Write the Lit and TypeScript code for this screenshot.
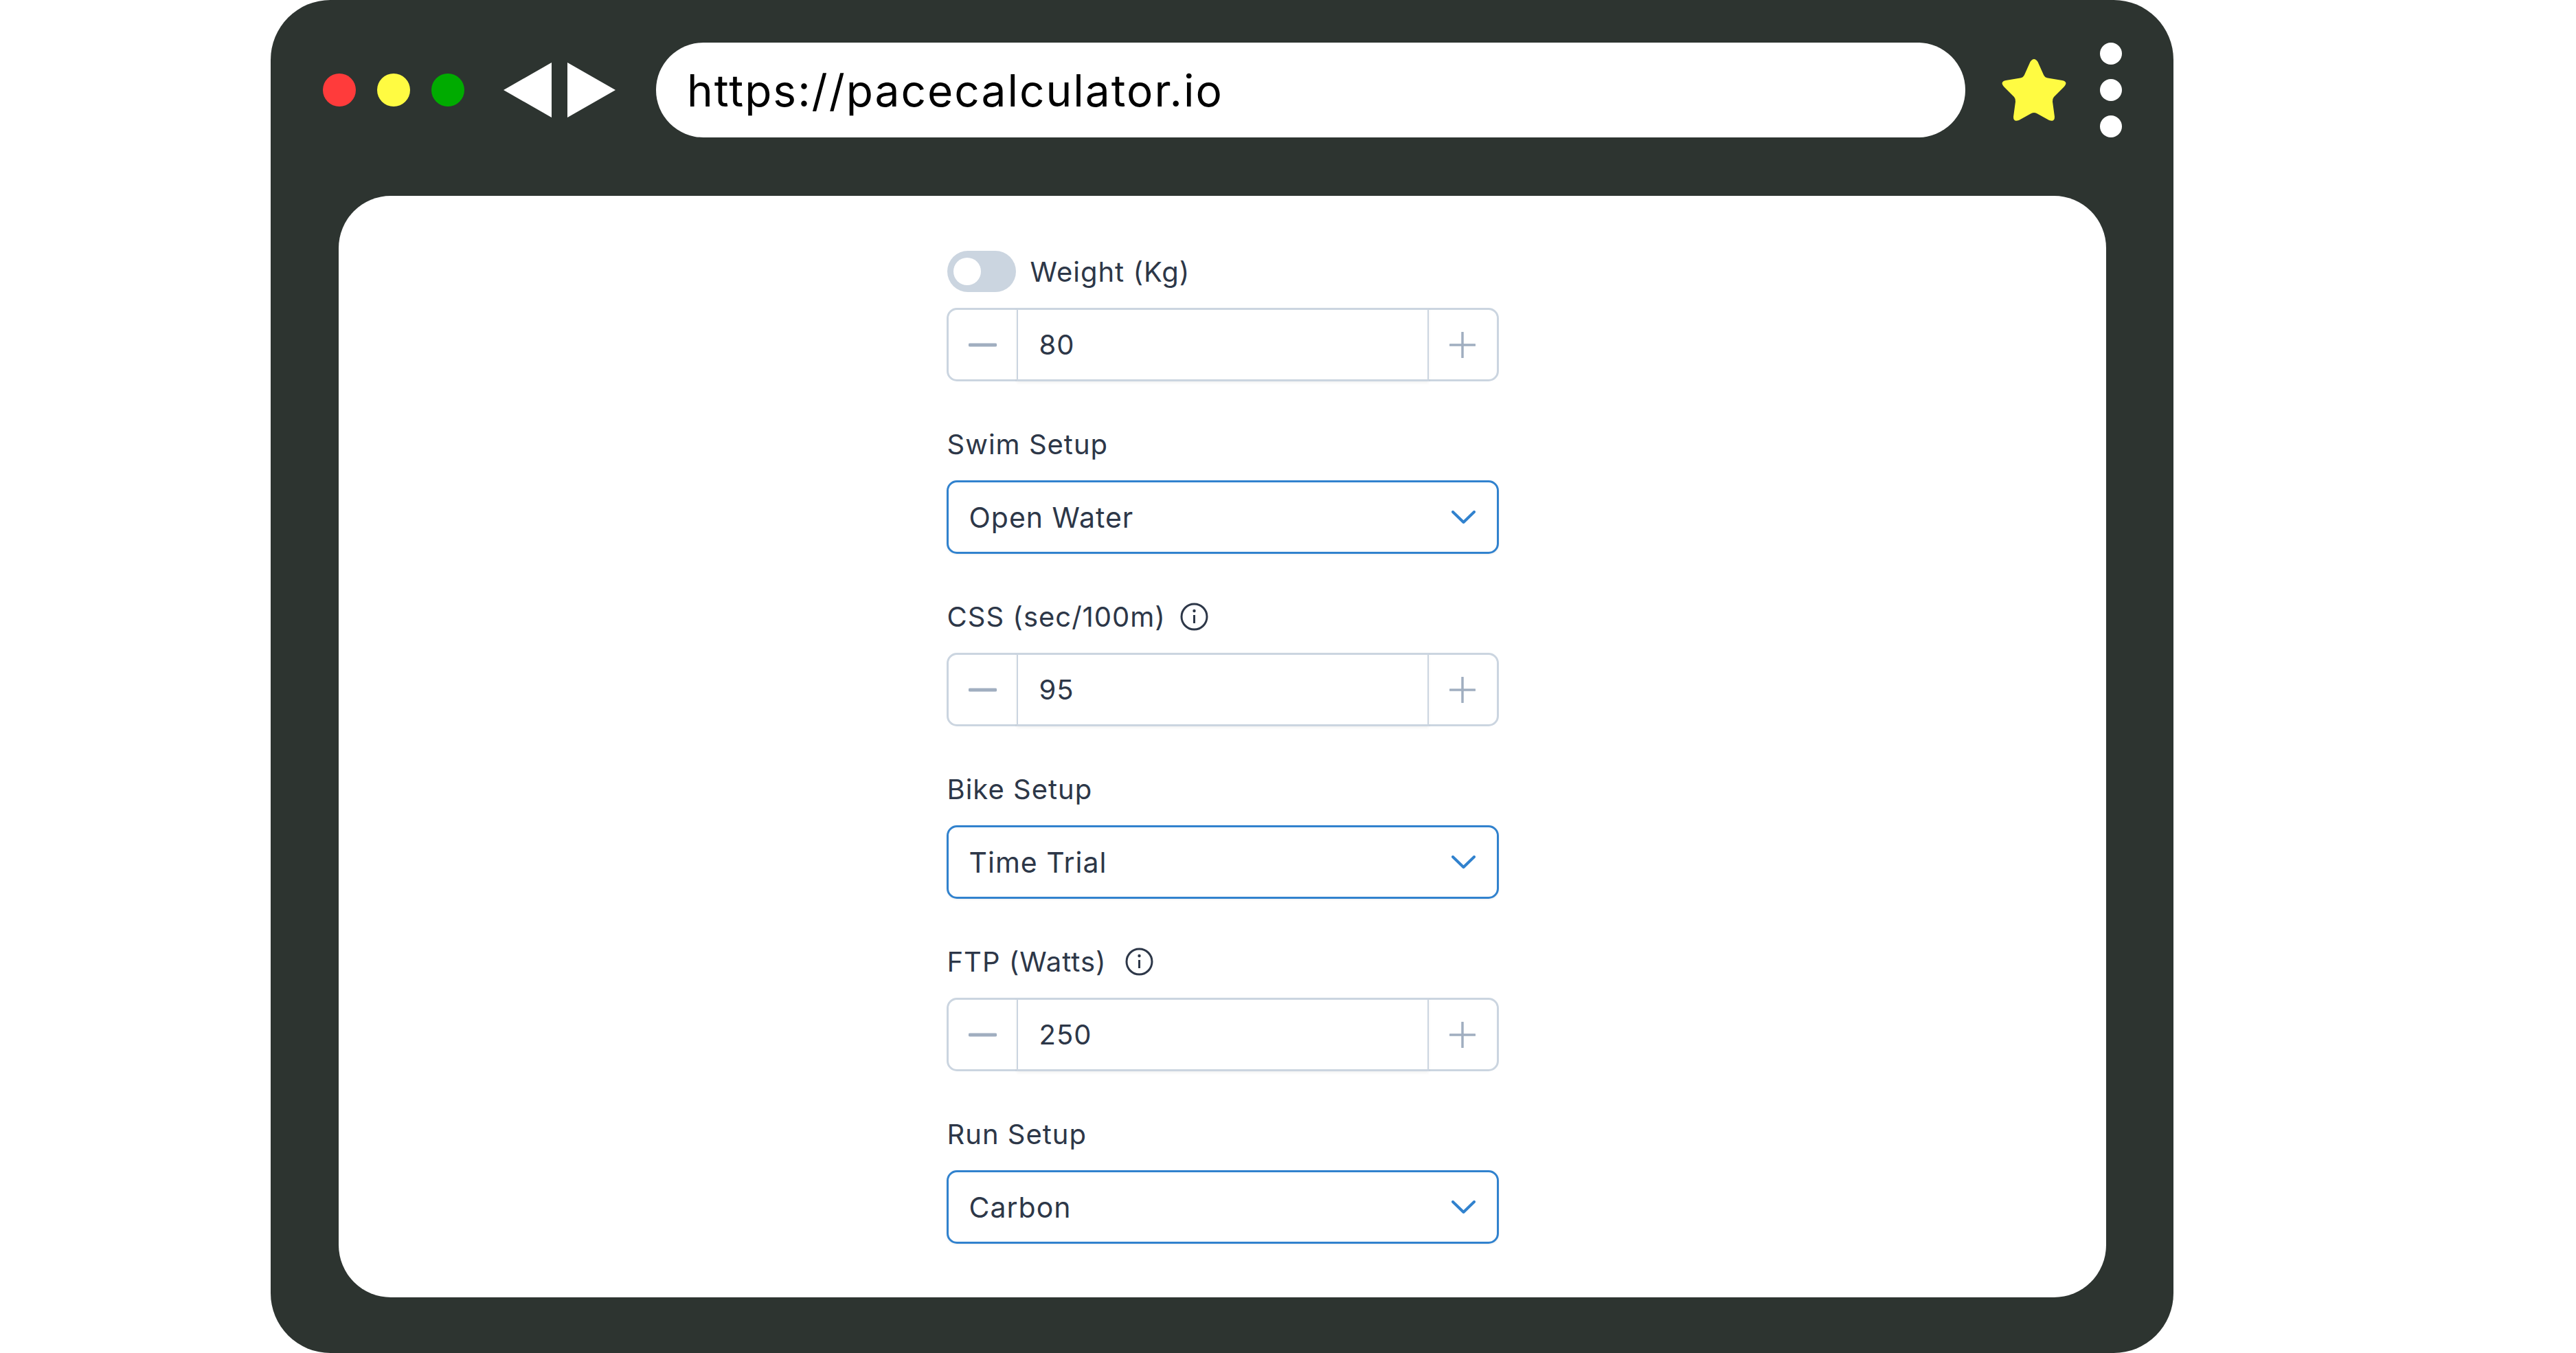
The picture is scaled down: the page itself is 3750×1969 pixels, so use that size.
import { LitElement, html, css, svg } from "lit";
import { customElement } from "lit/decorators.js";

const chevron = svg`<path d="M2 2l15.5 15L33 2" fill="none" stroke="#3182ce" stroke-width="4" stroke-linecap="round" stroke-linejoin="round"/>`;

type Field =
  | { kind: "stepper"; label: string; value: string; toggle?: boolean; info?: string }
  | { kind: "select"; label: string; value: string };

const fields: Field[] = [
  { kind: "stepper", label: "Weight (Kg)", value: "80", toggle: true },
  { kind: "select", label: "Swim Setup", value: "Open Water" },
  { kind: "stepper", label: "CSS (sec/100m)", value: "95", info: "near" },
  { kind: "select", label: "Bike Setup", value: "Time Trial" },
  { kind: "stepper", label: "FTP (Watts)", value: "250", info: "far" },
  { kind: "select", label: "Run Setup", value: "Carbon" },
];

@customElement("app-root")
export class AppRoot extends LitElement {
  static styles = css`
    :host {
      display: block;
      height: 1969px;
      background: #fff;
      font-family: Inter, "Liberation Sans", sans-serif;
    }
    .frame {
      box-sizing: border-box;
      width: 2770px;
      height: 1969px;
      margin-left: 394px;
      background: #2d3430;
      border-radius: 87px;
      display: flex;
      flex-direction: column;
      padding: 0 98px 81px 99px;
    }

    /* browser chrome */
    .toolbar {
      box-sizing: border-box;
      height: 285px;
      flex: none;
      padding-top: 62px;
      margin: 0 -98px 0 -99px;
    }
    .bar {
      height: 138px;
      display: flex;
      align-items: center;
      padding-left: 75.5px;
    }
    .lights {
      display: flex;
      gap: 31px;
    }
    .light {
      width: 48px;
      height: 48px;
      border-radius: 50%;
    }
    .red { background: #ff3b3b; }
    .yellow { background: #fffb42; }
    .green { background: #00ab00; }
    .nav {
      display: flex;
      gap: 23px;
      margin-left: 57px;
    }
    .nav svg { display: block; }
    .url {
      box-sizing: border-box;
      width: 1906px;
      height: 138px;
      margin-left: 59.5px;
      padding-left: 45px;
      background: #fff;
      border-radius: 69px;
      display: flex;
      align-items: center;
      color: #000;
      font-size: 64px;
      letter-spacing: 2px;
      white-space: nowrap;
    }
    .star {
      display: block;
      margin-left: 53px;
      overflow: visible;
    }
    .more {
      display: flex;
      flex-direction: column;
      gap: 21px;
      margin-left: 49px;
    }
    .more span {
      width: 32px;
      height: 32px;
      border-radius: 50%;
      background: #fff;
    }

    /* page */
    .panel {
      flex: 1;
      background: #fff;
      border-radius: 76px;
      display: flex;
      justify-content: center;
      padding-top: 80px;
    }
    .form {
      width: 804px;
      display: flex;
      flex-direction: column;
      gap: 61px;
    }
    .label {
      height: 60px;
      margin-bottom: 23px;
      padding-left: 1px;
      display: flex;
      align-items: center;
      font-size: 40px;
      letter-spacing: 1px;
      color: #2d3748;
      white-space: nowrap;
    }
    .toggle {
      position: relative;
      width: 100px;
      height: 60px;
      margin-right: 21px;
      border-radius: 30px;
      background: #cbd5e0;
    }
    .toggle::after {
      content: "";
      position: absolute;
      left: 9px;
      top: 10px;
      width: 40px;
      height: 40px;
      border-radius: 50%;
      background: #fff;
    }
    .info { display: block; flex: none; }
    .info.near { margin-left: 21px; }
    .info.far { margin-left: 27px; }

    .stepper,
    .select {
      box-sizing: border-box;
      height: 107px;
      display: flex;
      align-items: center;
      font-size: 40px;
      letter-spacing: 1px;
      color: #2d3748;
      background: #fff;
    }
    .stepper {
      border: 3px solid #cbd5e0;
      border-radius: 15px;
    }
    .step {
      flex: none;
      width: 99px;
      height: 100%;
      display: flex;
      align-items: center;
      justify-content: center;
    }
    .value {
      flex: 1;
      align-self: stretch;
      margin: -3px 0;
      padding-left: 31px;
      display: flex;
      align-items: center;
      border: 2px solid #cbd5e0;
      border-top-width: 3px;
      border-bottom-width: 3px;
      box-shadow: 0 2px 4px rgba(0, 0, 0, 0.06);
    }
    .select {
      justify-content: space-between;
      padding: 0 31px 0 30px;
      border: 3px solid #3182ce;
      border-radius: 15px;
      box-shadow: 0 1px 3px rgba(0, 0, 0, 0.08);
      font-size: 41px;
    }
    .select svg { display: block; }
  `;

  private renderField(f: Field) {
    if (f.kind === "select") {
      return html`<div class="field">
        <div class="label">${f.label}</div>
        <div class="select">
          <span>${f.value}</span>
          <svg width="35" height="19" viewBox="0 0 35 19">${chevron}</svg>
        </div>
      </div>`;
    }
    return html`<div class="field">
      <div class="label">
        ${f.toggle ? html`<span class="toggle"></span>` : ""}
        <span>${f.label}</span>
        ${f.info
          ? html`<svg class="info ${f.info}" width="41" height="41" viewBox="0 0 41 41">
              <circle cx="20.5" cy="20.5" r="18.5" fill="none" stroke="#2d3748" stroke-width="3"/>
              <circle cx="20.5" cy="12" r="2.2" fill="#2d3748"/>
              <path d="M20.5 18v12" stroke="#2d3748" stroke-width="3"/>
            </svg>`
          : ""}
      </div>
      <div class="stepper">
        <div class="step">
          <svg width="41" height="6" viewBox="0 0 41 6"><path d="M2 3h37" stroke="#a0aec0" stroke-width="5" stroke-linecap="round"/></svg>
        </div>
        <div class="value">${f.value}</div>
        <div class="step">
          <svg width="38" height="38" viewBox="0 0 38 38"><path d="M19 1v36M1 19h36" stroke="#a0aec0" stroke-width="3.5" stroke-linecap="round"/></svg>
        </div>
      </div>
    </div>`;
  }

  render() {
    return html`
      <div class="frame">
        <div class="toolbar">
          <div class="bar">
            <div class="lights">
              <span class="light red"></span>
              <span class="light yellow"></span>
              <span class="light green"></span>
            </div>
            <div class="nav">
              <svg width="70" height="80" viewBox="0 0 70 80"><path d="M70 0v80L0 40z" fill="#fff"/></svg>
              <svg width="70" height="80" viewBox="0 0 70 80"><path d="M0 0v80l70-40z" fill="#fff"/></svg>
            </div>
            <div class="url">https://pacecalculator.io</div>
            <svg class="star" width="94" height="90" viewBox="0 0 94 90">
              <path fill="#fffb42" d="M41.5 4Q47 -4 52.5 4L61 23Q63 27 67 27.5L88 31Q97 33 91 40L76 55Q73.5 58 74 62L77 84Q77 92 69 89L51 79Q47 77 43 79L25 89Q17 92 17 84L20 62Q20.5 58 18 55L3 40Q-3 33 6 31L27 27.5Q31 27 33 23Z"/>
            </svg>
            <div class="more"><span></span><span></span><span></span></div>
          </div>
        </div>
        <div class="panel">
          <div class="form">${fields.map((f) => this.renderField(f))}</div>
        </div>
      </div>
    `;
  }
}
